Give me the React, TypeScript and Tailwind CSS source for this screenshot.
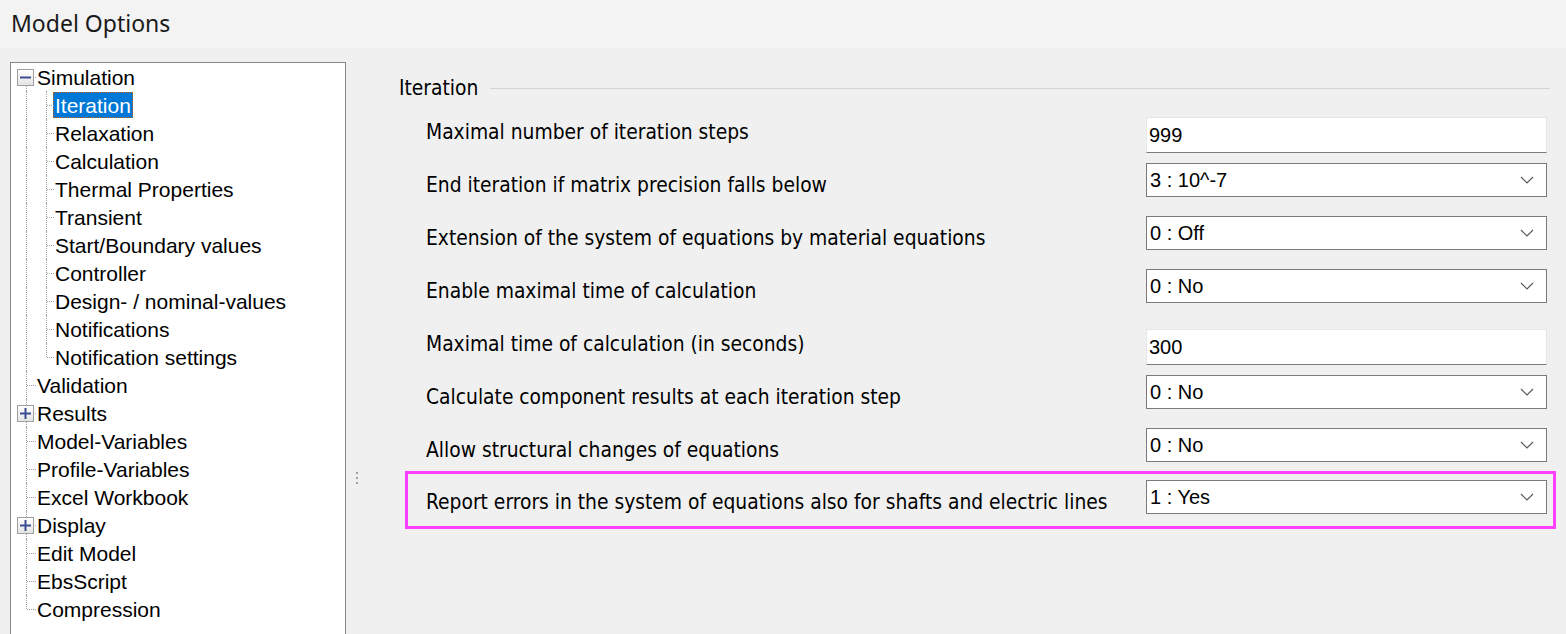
import React from "react";

type Node = { label: string; level: 0 | 1; toggle?: "minus" | "plus"; selected?: boolean; lastChild?: boolean };

const tree: Node[] = [
  { label: "Simulation", level: 0, toggle: "minus" },
  { label: "Iteration", level: 1, selected: true },
  { label: "Relaxation", level: 1 },
  { label: "Calculation", level: 1 },
  { label: "Thermal Properties", level: 1 },
  { label: "Transient", level: 1 },
  { label: "Start/Boundary values", level: 1 },
  { label: "Controller", level: 1 },
  { label: "Design- / nominal-values", level: 1 },
  { label: "Notifications", level: 1 },
  { label: "Notification settings", level: 1, lastChild: true },
  { label: "Validation", level: 0 },
  { label: "Results", level: 0, toggle: "plus" },
  { label: "Model-Variables", level: 0 },
  { label: "Profile-Variables", level: 0 },
  { label: "Excel Workbook", level: 0 },
  { label: "Display", level: 0, toggle: "plus" },
  { label: "Edit Model", level: 0 },
  { label: "EbsScript", level: 0 },
  { label: "Compression", level: 0 },
];

type Row = { label: string; kind: "text" | "select"; value: string };

const rows: Row[] = [
  { label: "Maximal number of iteration steps", kind: "text", value: "999" },
  { label: "End iteration if matrix precision falls below", kind: "select", value: "3 : 10^-7" },
  { label: "Extension of the system of equations by material equations", kind: "select", value: "0 : Off" },
  { label: "Enable maximal time of calculation", kind: "select", value: "0 : No" },
  { label: "Maximal time of calculation (in seconds)", kind: "text", value: "300" },
  { label: "Calculate component results at each iteration step", kind: "select", value: "0 : No" },
  { label: "Allow structural changes of equations", kind: "select", value: "0 : No" },
];

const dotV = "border-l border-dotted border-[#a0a0a0]";
const dotH = "border-t border-dotted border-[#a0a0a0]";

function ToggleBox({ kind }: { kind: "minus" | "plus" }) {
  return (
    <div className="absolute left-[5px] top-[6px] z-10 flex h-[17px] w-[17px] items-center justify-center border border-[#a0a0a0] bg-gradient-to-b from-white to-[#e4e4e4]">
      <svg width="11" height="11" viewBox="0 0 11 11">
        <rect x="0" y="4.5" width="11" height="2" fill="#3c4e92" />
        {kind === "plus" && <rect x="4.5" y="0" width="2" height="11" fill="#3c4e92" />}
      </svg>
    </div>
  );
}

function TreeRow({ node, index }: { node: Node; index: number }) {
  const isLastTop = node.label === "Compression";
  const isFirst = index === 0;
  return (
    <div className="relative flex h-[28px] items-center">
      {/* top-level vertical line */}
      <div
        className={`absolute left-[14px] w-0 ${dotV} ${isFirst ? "top-[14px] bottom-0" : isLastTop ? "top-0 h-[14px]" : "top-0 bottom-0"}`}
      />
      {node.level === 1 && (
        <div className={`absolute left-[34px] w-0 ${dotV} ${node.lastChild ? "top-0 h-[14px]" : "top-0 bottom-0"}`} />
      )}
      {node.level === 0 ? (
        <div className={`absolute left-[15px] top-[14px] h-0 w-[9px] ${dotH}`} />
      ) : (
        <div className={`absolute left-[35px] top-[14px] h-0 w-[7px] ${dotH}`} />
      )}
      {node.toggle && <ToggleBox kind={node.toggle} />}
      <span
        className={
          node.level === 0
            ? "ml-[24px] px-px"
            : node.selected
            ? "ml-[41px] flex h-[26px] items-center border border-dotted border-[#c65d00] bg-[#0078d7] px-px text-white"
            : "ml-[42px] px-px"
        }
      >
        {node.label}
      </span>
    </div>
  );
}

function Chevron() {
  return (
    <svg width="14" height="8" viewBox="0 0 14 8" className="text-[#555]">
      <path d="M1 1 L7 7 L13 1" fill="none" stroke="currentColor" strokeWidth="1.1" />
    </svg>
  );
}

function Control({ row }: { row: Row }) {
  if (row.kind === "text") {
    return (
      <div className="mt-[11px] flex h-[36px] w-[401px] items-center border border-[#e6e6e6] border-b-[#7a7a7a] bg-white pl-[2px] font-['Liberation_Sans',Arial,sans-serif] text-[20px] text-black">
        {row.value}
      </div>
    );
  }
  return (
    <div className="mt-[4px] flex h-[34px] w-[401px] items-center justify-between border border-[#7a7a7a] bg-white pl-[3px] pr-[12px] font-['Liberation_Sans',Arial,sans-serif] text-[20px] text-black">
      <span>{row.value}</span>
      <Chevron />
    </div>
  );
}

export default function App() {
  return (
    <div className="flex h-[634px] w-[1566px] flex-col overflow-hidden bg-[#f0f0f0] font-['DejaVu_Sans_Condensed','DejaVu_Sans',sans-serif] text-black">
      <div className="flex h-[48px] shrink-0 items-center bg-[#f3f3f3] pl-[11px] pb-[2px] font-['Noto_Sans',sans-serif] text-[23px] text-[#1a1a1a]">
        Model Options
      </div>
      <div className="flex flex-1 pt-[14px]">
        {/* Tree */}
        <div className="ml-[10px] h-[600px] w-[336px] shrink-0 border border-[#828790] bg-white pl-[1px] font-['Liberation_Sans',Arial,sans-serif] text-[21px] leading-none">
          {tree.map((n, i) => (
            <TreeRow key={n.label} node={n} index={i} />
          ))}
        </div>

        {/* Splitter */}
        <div className="flex w-[22px] shrink-0 flex-col items-center pt-[410px]">
          <div className="flex flex-col gap-[3px]">
            <div className="h-[2px] w-[2px] bg-[#a0a0a0]" />
            <div className="h-[2px] w-[2px] bg-[#a0a0a0]" />
            <div className="h-[2px] w-[2px] bg-[#a0a0a0]" />
          </div>
        </div>

        {/* Options */}
        <div className="flex flex-1 flex-col pl-[31px] pr-[16px] pt-[14px] text-[20.8px]">
          <div className="flex h-[24px] items-center gap-[12px]">
            <span className="leading-none">Iteration</span>
            <div className="h-px flex-1 bg-[#d5d5d5]" />
          </div>
          <div className="flex flex-col pl-[27px] pt-[6px]">
            {rows.map((r) => (
              <div key={r.label} className="flex h-[53px] items-start justify-between pr-[3px]">
                <span className="mt-[13px] leading-[26px]">{r.label}</span>
                <Control row={r} />
              </div>
            ))}
            <div className="-ml-[21px] -mt-[6px] mr-[-6px] flex h-[58px] items-start justify-between border-[3px] border-[#ff40ff] pl-[18px] pr-[6px] pt-[2px]">
              <span className="mt-[13px] leading-[26px]">Report errors in the system of equations also for shafts and electric lines</span>
              <Control row={{ label: "", kind: "select", value: "1 : Yes" }} />
            </div>
          </div>
        </div>
      </div>
    </div>
  );
}
